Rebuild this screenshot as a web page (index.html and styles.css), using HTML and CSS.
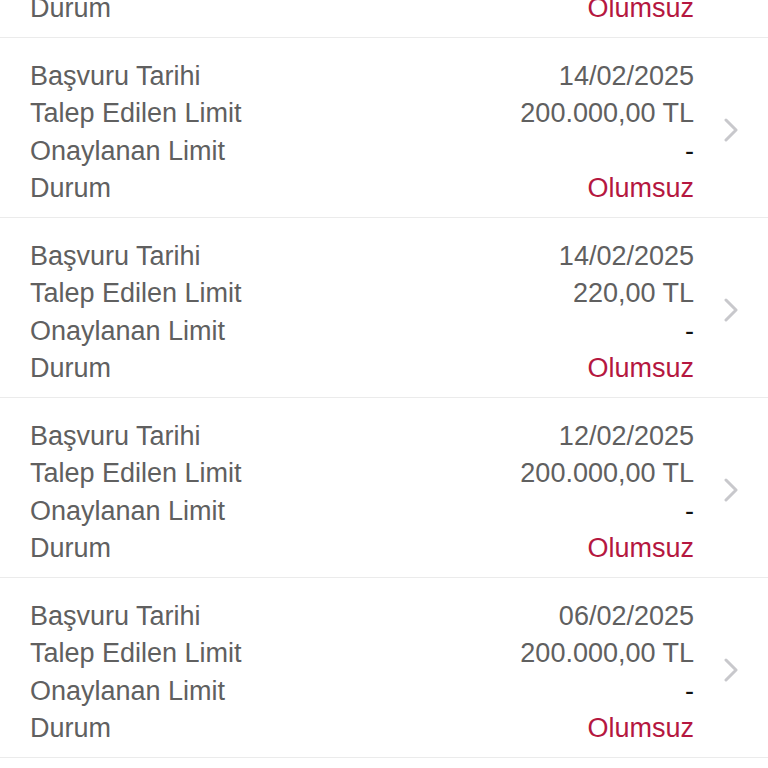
FILE: index.html
```html
<!DOCTYPE html>
<html lang="tr">
<head>
    <meta charset="utf-8">
    <title>Limit Başvuruları</title>
    <link rel="stylesheet" href="styles.css">
</head>
<body>

    <div class="app-list">
        <div class="app-item partial">
            <div class="app-info">
                <div class="label">Durum</div>
                <div class="value status">Olumsuz</div>
            </div>
        </div>

        <div class="app-item">
            <div class="app-info">
                <div class="label">Başvuru Tarihi</div>
                <div class="value">14/02/2025</div>
                <div class="label">Talep Edilen Limit</div>
                <div class="value">200.000,00 TL</div>
                <div class="label">Onaylanan Limit</div>
                <div class="value dash">-</div>
                <div class="label">Durum</div>
                <div class="value status">Olumsuz</div>
            </div>
            <div class="chevron">
                <svg width="14" height="24" viewBox="0 0 14 24"><polyline points="2,2 12,12 2,22" fill="none" stroke="#c8c8cc" stroke-width="3" stroke-linecap="round" stroke-linejoin="round"/></svg>
            </div>
        </div>

        <div class="app-item">
            <div class="app-info">
                <div class="label">Başvuru Tarihi</div>
                <div class="value">14/02/2025</div>
                <div class="label">Talep Edilen Limit</div>
                <div class="value">220,00 TL</div>
                <div class="label">Onaylanan Limit</div>
                <div class="value dash">-</div>
                <div class="label">Durum</div>
                <div class="value status">Olumsuz</div>
            </div>
            <div class="chevron">
                <svg width="14" height="24" viewBox="0 0 14 24"><polyline points="2,2 12,12 2,22" fill="none" stroke="#c8c8cc" stroke-width="3" stroke-linecap="round" stroke-linejoin="round"/></svg>
            </div>
        </div>

        <div class="app-item">
            <div class="app-info">
                <div class="label">Başvuru Tarihi</div>
                <div class="value">12/02/2025</div>
                <div class="label">Talep Edilen Limit</div>
                <div class="value">200.000,00 TL</div>
                <div class="label">Onaylanan Limit</div>
                <div class="value dash">-</div>
                <div class="label">Durum</div>
                <div class="value status">Olumsuz</div>
            </div>
            <div class="chevron">
                <svg width="14" height="24" viewBox="0 0 14 24"><polyline points="2,2 12,12 2,22" fill="none" stroke="#c8c8cc" stroke-width="3" stroke-linecap="round" stroke-linejoin="round"/></svg>
            </div>
        </div>

        <div class="app-item">
            <div class="app-info">
                <div class="label">Başvuru Tarihi</div>
                <div class="value">06/02/2025</div>
                <div class="label">Talep Edilen Limit</div>
                <div class="value">200.000,00 TL</div>
                <div class="label">Onaylanan Limit</div>
                <div class="value dash">-</div>
                <div class="label">Durum</div>
                <div class="value status">Olumsuz</div>
            </div>
            <div class="chevron">
                <svg width="14" height="24" viewBox="0 0 14 24"><polyline points="2,2 12,12 2,22" fill="none" stroke="#c8c8cc" stroke-width="3" stroke-linecap="round" stroke-linejoin="round"/></svg>
            </div>
        </div>
    </div>

</body>
</html>
```
FILE: styles.css
```css
body {
    font-family: "Liberation Sans", Arial, sans-serif;
    margin: 0;
    background-color: #ffffff;
    overflow: hidden;
}
.app-list {
    display: flex;
    flex-direction: column;
}
.app-item {
    display: flex;
    align-items: center;
    padding: 20px 0 9px 30px;
    border-bottom: 1px solid #ebebeb;
}
.app-item.partial {
    margin-top: -30px;
    padding-right: 74px;
}
.app-info {
    flex: 1;
    display: grid;
    grid-template-columns: 1fr auto;
    font-size: 27px;
    line-height: 37.5px;
}
.label {
    color: #606060;
}
.value {
    color: #606060;
    text-align: right;
}
.value.dash {
    color: #111111;
}
.value.status {
    color: #b5173f;
}
.chevron {
    width: 74px;
    display: flex;
    justify-content: center;
    margin-top: -6px;
}
```
